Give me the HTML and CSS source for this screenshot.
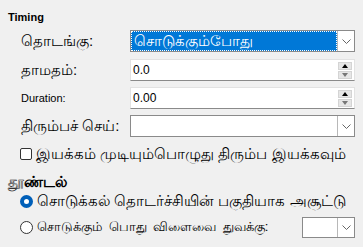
FILE: index.html
```html
<!DOCTYPE html>
<html lang="ta">
<head>
<meta charset="utf-8">
<title>Timing</title>
<link rel="stylesheet" href="styles.css">
</head>
<body>
<div class="panel">
  <h2 class="sec sec-timing">Timing</h2>
  <div class="form">
    <div class="row row-first">
      <span class="lbl"><span class="ta">தொடங்கு:</span></span>
      <div class="combo focused">
        <div class="combo-val"><span class="focus-ring ta">சொடுக்கும்போது</span></div>
        <div class="drop"><svg width="9" height="5" viewBox="0 0 9 5"><path d="M0.5 0.5 L4.5 4.5 L8.5 0.5" fill="none" stroke="#666" stroke-width="1"/></svg></div>
      </div>
    </div>
    <div class="row">
      <span class="lbl"><span class="ta">தாமதம்:</span></span>
      <div class="spin">
        <span class="spin-val">0.0</span>
        <div class="spin-btns">
          <span class="sbtn"><span class="tri up"></span></span>
          <span class="sbtn"><span class="tri down"></span></span>
        </div>
      </div>
    </div>
    <div class="row">
      <span class="lbl">Duration:</span>
      <div class="spin">
        <span class="spin-val">0.00</span>
        <div class="spin-btns">
          <span class="sbtn"><span class="tri up"></span></span>
          <span class="sbtn"><span class="tri down"></span></span>
        </div>
      </div>
    </div>
    <div class="row">
      <span class="lbl"><span class="ta">திரும்பச் செய்:</span></span>
      <div class="combo">
        <div class="combo-val"></div>
        <div class="drop"><svg width="9" height="5" viewBox="0 0 9 5"><path d="M0.5 0.5 L4.5 4.5 L8.5 0.5" fill="none" stroke="#666" stroke-width="1"/></svg></div>
      </div>
    </div>
  </div>
  <div class="check-row">
    <span class="checkbox"></span>
    <span class="opt-text ta">இயக்கம் முடியும்பொழுது திரும்ப இயக்கவும்</span>
  </div>
  <h2 class="sec sec-trigger ta">தூண்டல்</h2>
  <div class="radio-row radio-first">
    <span class="radio checked"></span>
    <span class="opt-text ta">சொடுக்கல் தொடர்ச்சியின் பகுதியாக அசூட்டு</span>
  </div>
  <div class="radio-row radio-second">
    <span class="radio"></span>
    <span class="opt-text ta ta-narrow">சொடுக்கும் பொது விளைவை துவக்கு:</span>
    <div class="combo combo-small">
      <div class="combo-val"></div>
      <div class="drop"><svg width="9" height="5" viewBox="0 0 9 5"><path d="M0.5 0.5 L4.5 4.5 L8.5 0.5" fill="none" stroke="#666" stroke-width="1"/></svg></div>
    </div>
  </div>
</div>
</body>
</html>
```
FILE: styles.css
```css
html, body {
  margin: 0;
  padding: 0;
  background: #f0f0f0;
}
body {
  font-family: "Liberation Sans", "Noto Sans", sans-serif;
  font-size: 11px;
  color: #000;
  width: 363px;
  height: 247px;
  overflow: hidden;
}
.ta {
  font-size: 15px;
  line-height: 16px;
}
.ta-narrow {
  font-size: 13px;
  word-spacing: 3px;
}
.panel {
  padding: 10px 8px 0 8px;
}
.sec {
  margin: 0;
  font-size: 11px;
  font-weight: bold;
  line-height: 14px;
  height: 14px;
}
.sec.ta {
  font-size: 15px;
  line-height: 14px;
}
.form {
  margin-top: 6px;
  margin-left: 13px;
  display: flex;
  flex-direction: column;
  gap: 6px;
}
.row {
  display: flex;
  align-items: center;
  height: 22px;
}
.row-first {
  margin-bottom: 1px;
}
.lbl {
  width: 109px;
  flex: none;
  white-space: nowrap;
}
.combo {
  flex: 1;
  display: flex;
  height: 22px;
  box-sizing: border-box;
  border: 1px solid #8a8a8a;
  background: #fff;
}
.combo-val {
  flex: 1;
  display: flex;
  align-items: stretch;
}
.combo.focused .combo-val {
  background: #0078d7;
  color: #fff;
}
.focus-ring {
  flex: 1;
  display: flex;
  align-items: center;
  padding-left: 2px;
  border: 1px dotted #000;
  outline: 1px dotted #fff;
  outline-offset: -1px;
}
.drop {
  width: 17px;
  flex: none;
  display: flex;
  align-items: center;
  justify-content: center;
  box-sizing: border-box;
  border-left: 1px solid #b8b8b8;
  background: #fff;
}
.spin {
  flex: 1;
  display: flex;
  align-items: center;
  height: 22px;
  box-sizing: border-box;
  border: 1px solid #e2e2e2;
  border-bottom: 1px solid #8a8a8a;
  background: #fff;
  padding: 0 2px 0 2px;
}
.spin-val {
  flex: 1;
  font-size: 12px;
}
.spin-btns {
  display: flex;
  flex-direction: column;
  gap: 1px;
}
.sbtn {
  width: 14px;
  height: 8px;
  box-sizing: border-box;
  background: #e6e6e6;
  border: 1px solid #d4d4d4;
  display: flex;
  align-items: center;
  justify-content: center;
}
.tri {
  width: 0;
  height: 0;
  border-left: 3.5px solid transparent;
  border-right: 3.5px solid transparent;
}
.tri.up {
  border-bottom: 4px solid #000;
}
.tri.down {
  border-top: 4px solid #777;
}
.check-row {
  display: flex;
  align-items: center;
  height: 14px;
  margin-top: 10px;
  margin-left: 12px;
  gap: 4px;
}
.checkbox {
  width: 12px;
  height: 12px;
  box-sizing: border-box;
  border: 1px solid #333;
  border-radius: 2px;
  background: #fff;
  flex: none;
}
.opt-text {
  white-space: nowrap;
}
.sec-trigger {
  margin-top: 14px;
}
.radio-row {
  display: flex;
  align-items: center;
  margin-left: 12px;
  gap: 4px;
}
.radio-first {
  height: 14px;
  margin-top: 5px;
}
.radio-second {
  height: 22px;
  margin-top: 8px;
}
.radio {
  width: 13px;
  height: 13px;
  box-sizing: border-box;
  border-radius: 50%;
  border: 1px solid #333;
  background: #fff;
  flex: none;
}
.radio.checked {
  border: 4px solid #005fb8;
  background: #fff;
}
.combo-small {
  flex: none;
  width: 53px;
  height: 21px;
  margin-left: auto;
}
```
